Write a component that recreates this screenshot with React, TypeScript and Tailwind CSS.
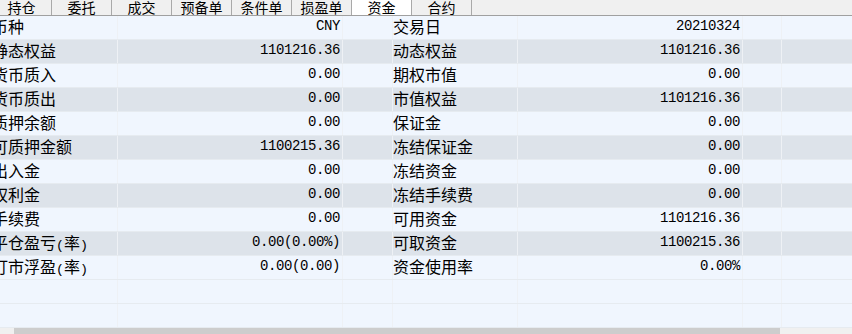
const TABS = ['持仓', '委托', '成交', '预备单', '条件单', '损盈单', '资金', '合约'];

const ROWS: [string, string, string, string][] = [
  ['币种', 'CNY', '交易日', '20210324'],
  ['静态权益', '1101216.36', '动态权益', '1101216.36'],
  ['货币质入', '0.00', '期权市值', '0.00'],
  ['货币质出', '0.00', '市值权益', '1101216.36'],
  ['质押余额', '0.00', '保证金', '0.00'],
  ['可质押金额', '1100215.36', '冻结保证金', '0.00'],
  ['出入金', '0.00', '冻结资金', '0.00'],
  ['权利金', '0.00', '冻结手续费', '0.00'],
  ['手续费', '0.00', '可用资金', '1101216.36'],
  ['平仓盈亏(率)', '0.00(0.00%)', '可取资金', '1100215.36'],
  ['盯市浮盈(率)', '0.00(0.00)', '资金使用率', '0.00%'],
  ['', '', '', ''],
  ['', '', '', ''],
];

const cjk = "font-['Noto_Sans_CJK_SC',sans-serif]";
const label = "font-['Liberation_Mono','Noto_Sans_CJK_SC',monospace] text-[13.3px] leading-[21px] whitespace-nowrap";
const mono = "font-['Liberation_Mono','Noto_Sans_CJK_SC',monospace] text-[14px] tracking-[-0.4px] leading-[21px] whitespace-nowrap";

// CJK chars in 16px, brackets as half-width mono
function Label({ text }: { text: string }) {
  const parts = text.split(/(\(|\))/);
  return (
    <>
      {parts.map((p, i) =>
        p === '(' || p === ')' ? (
          <span key={i}>{p}</span>
        ) : (
          <span key={i} className={`${cjk} text-[16px]`}>{p}</span>
        )
      )}
    </>
  );
}

export default function App() {
  return (
    <div className="w-[852px] h-[334px] overflow-hidden bg-[#f0f6fe] text-black flex flex-col">
      {/* tabs */}
      <div className="h-[16px] shrink-0 bg-[#f0f0f0] border-b border-[#a0a0a0] overflow-hidden">
        <div className="flex -ml-[8px]">
          {TABS.map((t) => (
            <div
              key={t}
              className={`w-[60px] h-[15px] shrink-0 border-r border-[#a9a9a9] text-center text-[14px] leading-[15px] ${cjk} ${
                t === '资金' ? 'bg-white' : ''
              }`}
            >
              {t}
            </div>
          ))}
        </div>
      </div>

      {/* grid */}
      <div className="flex flex-col overflow-hidden">
        {ROWS.map((r, i) => (
          <div
            key={i}
            className={`flex h-[24px] shrink-0 -ml-[7px] border-b border-[#e6ebf0] ${
              i % 2 === 1 && i < 11 ? 'bg-[#dde3ea]' : 'bg-[#f0f6fe]'
            }`}
          >
            <div className={`w-[125px] shrink-0 border-r border-[#eef1f5] -indent-[1px] ${label}`}>
              <Label text={r[0]} />
            </div>
            <div className={`w-[225px] shrink-0 border-r border-[#eef1f5] pr-[2px] text-right ${mono}`}>{r[1]}</div>
            <div className="w-[50px] shrink-0 border-r border-[#eef1f5]" />
            <div className={`w-[125px] shrink-0 border-r border-[#eef1f5] ${label}`}>
              <Label text={r[2]} />
            </div>
            <div className={`w-[225px] shrink-0 border-r border-[#eef1f5] pr-[2px] text-right ${mono}`}>{r[3]}</div>
            <div className="w-[39px] shrink-0 border-r border-[#eef1f5]" />
            <div className="flex-1" />
          </div>
        ))}
      </div>

      {/* horizontal scrollbar */}
      <div className="h-[6px] shrink-0 bg-[#f0f0f0] flex">
        <div className="ml-[14px] w-[766px] bg-[#cdcdcd]" />
      </div>
    </div>
  );
}
